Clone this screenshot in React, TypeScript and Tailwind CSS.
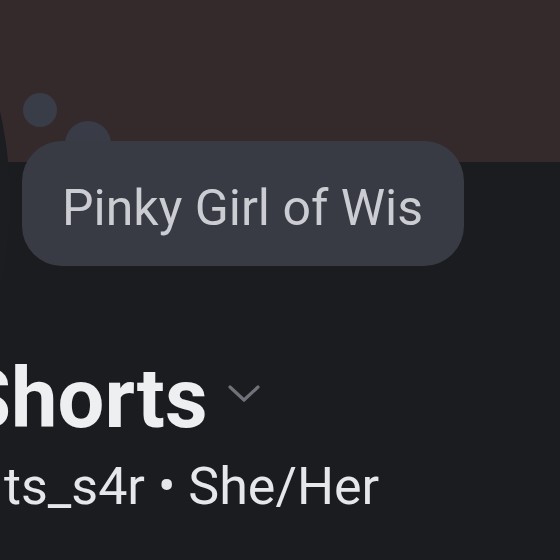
export default function App() {
  return (
    <div className="relative w-[560px] h-[560px] overflow-hidden bg-[#1b1c20]" style={{ fontFamily: 'Roboto, "Noto Sans", sans-serif' }}>
      <div className="h-[162px] bg-[#352a2b]" />
      {/* avatar edge */}
      <div className="absolute left-[-792px] top-[-201px] w-[802px] h-[802px] rounded-full bg-[#1c1d21]" />
      {/* thought circles */}
      <div className="absolute left-[23px] top-[93px] w-[34px] h-[34px] rounded-full bg-[#393d47]" />
      <div className="absolute left-[65px] top-[121px] w-[46px] h-[46px] rounded-full bg-[#393c46]" />
      {/* pill */}
      <div className="absolute left-[22px] top-[141px] w-[442px] h-[125px] rounded-[40px] bg-[#383b44] flex items-center pl-[40px] pt-[8px]">
        <span className="text-[50px] leading-none text-[#cbcdd3] whitespace-nowrap">Pinky Girl of Wis</span>
      </div>
      <div className="relative z-10 flex flex-col pt-[195px]">
        <div className="flex items-start gap-[19px] ml-[-40px]">
          <span className="text-[83px] font-bold leading-none text-[#eeeff1] whitespace-nowrap">Shorts</span>
          <svg width="34" height="22" viewBox="0 0 34 22" className="mt-[26px]">
            <path d="M3 4 L17 17 L31 4" fill="none" stroke="#707279" strokeWidth="3.2" strokeLinecap="round" strokeLinejoin="round" />
          </svg>
        </div>
        <span className="mt-[21px] ml-[4px] text-[52px] leading-none text-[#e6e7ea] whitespace-nowrap">ts_s4r • She/Her</span>
      </div>
    </div>
  );
}
